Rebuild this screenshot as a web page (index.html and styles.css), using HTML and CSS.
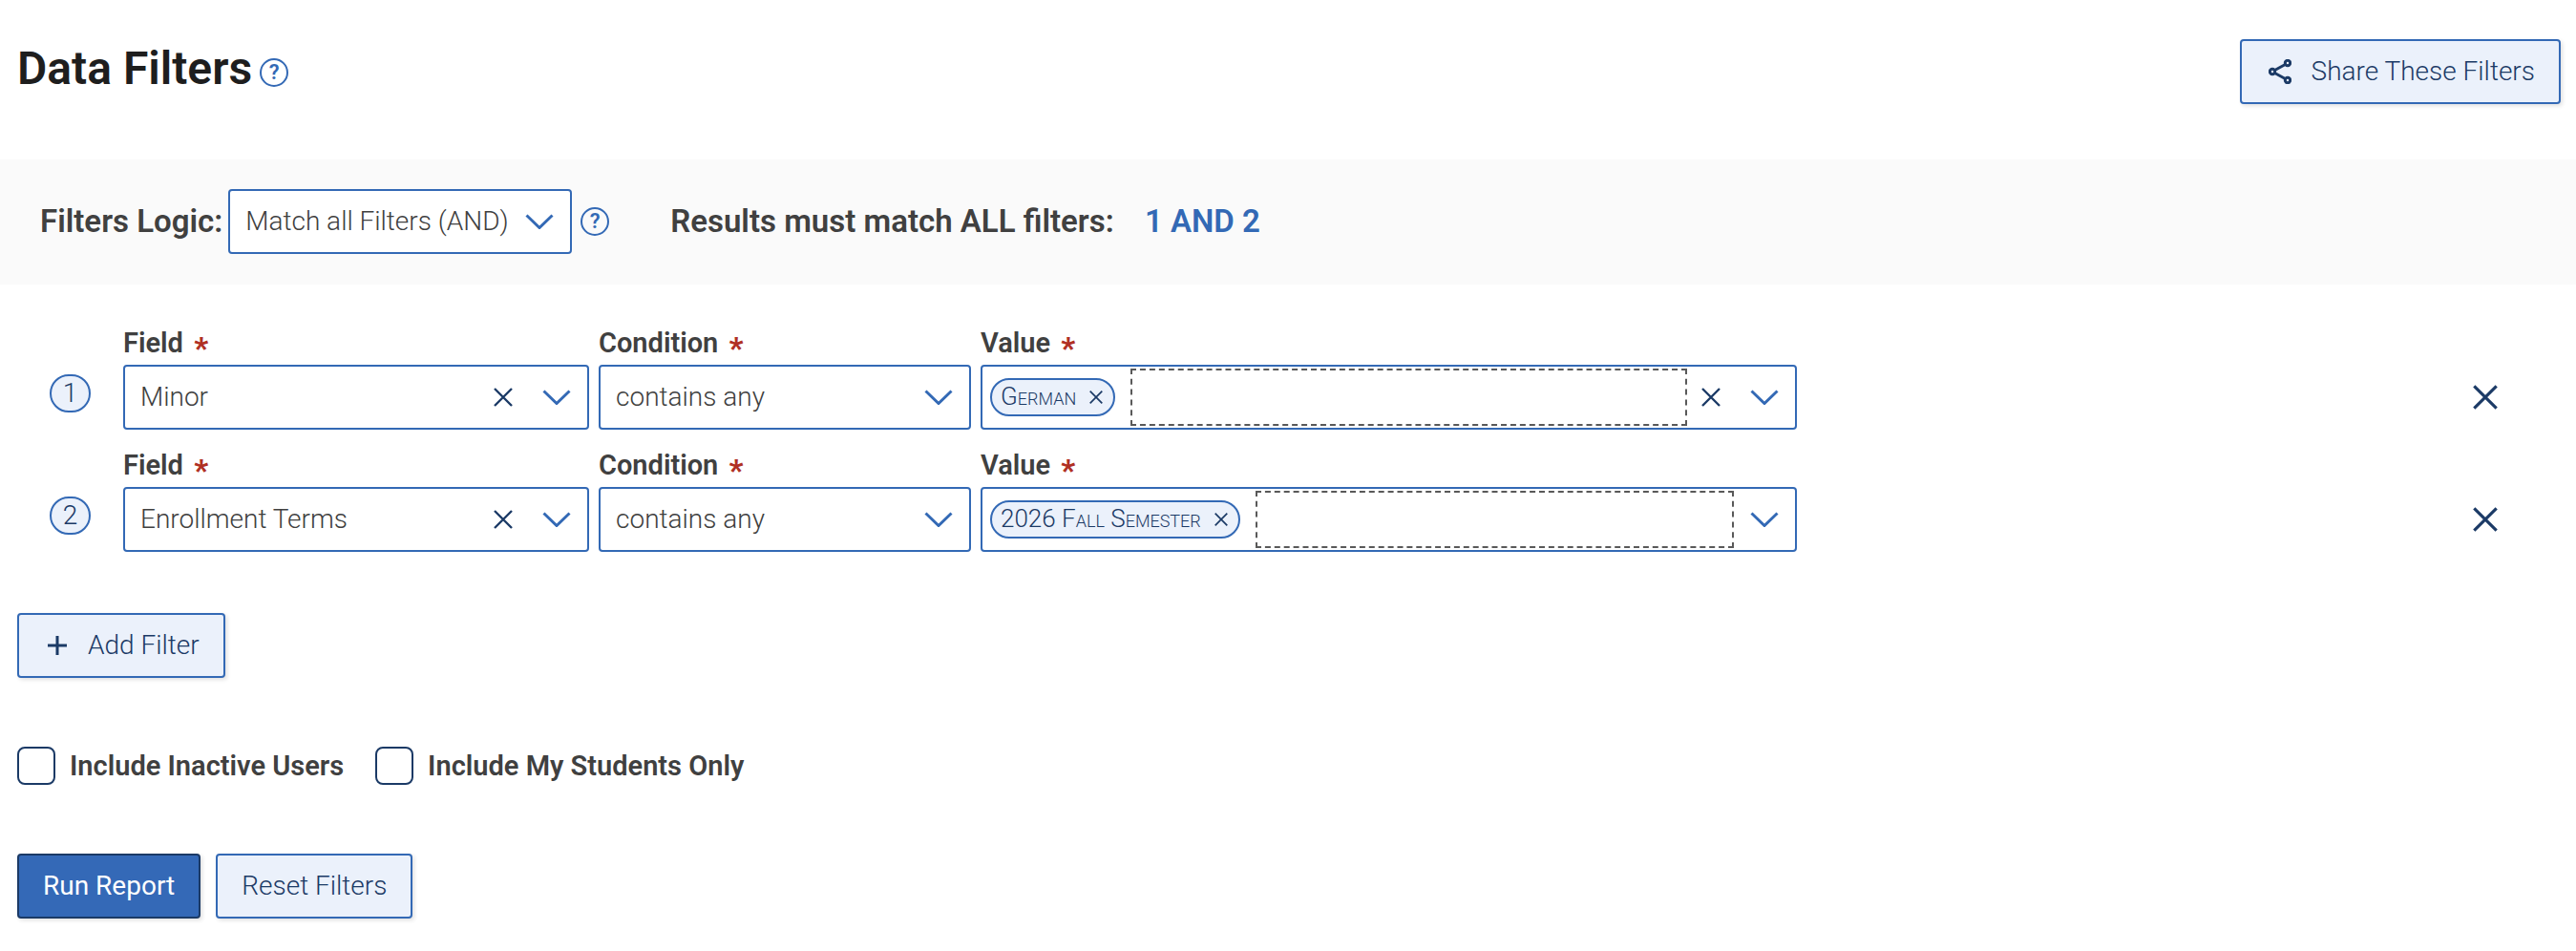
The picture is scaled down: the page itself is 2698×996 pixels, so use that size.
FILE: index.html
```
<!DOCTYPE html>
<html lang="en">
<head>
  <meta charset="UTF-8">
  <meta name="viewport" content="width=device-width, initial-scale=1.0">
  <title>Data Filters</title>
  <link rel="stylesheet" href="styles.css">
</head>
<body>

  <!-- shared icons -->
  <svg class="icon-defs" aria-hidden="true">
    <symbol id="chevron" viewBox="0 0 30 16">
      <path d="M1.5 1.5 L15 14.5 L28.5 1.5" />
    </symbol>
    <symbol id="cross" viewBox="0 0 20 20">
      <path d="M1 1 L19 19 M19 1 L1 19" />
    </symbol>
  </svg>

  <header class="page-header">
    <div class="title-group">
      <h1>Data Filters</h1>
      <button class="help-button" type="button" aria-label="Help with data filters">?</button>
    </div>
    <button class="button" type="button">
      <svg class="share-icon" viewBox="0 0 24 26">
        <path d="M6.5 11.5 L17.5 5.5 M6.5 14.5 L17.5 20.5" />
        <circle cx="4" cy="13" r="2.7" />
        <circle cx="20" cy="4" r="2.7" />
        <circle cx="20" cy="22" r="2.7" />
      </svg>
      Share These Filters
    </button>
  </header>

  <section class="logic-bar">
    <label class="logic-label" for="logic">Filters Logic:</label>
    <div class="select-box">
      <select id="logic">
        <option>Match all Filters (AND)</option>
      </select>
      <svg class="chevron"><use href="#chevron" /></svg>
    </div>
    <button class="help-button" type="button" aria-label="Help with filters logic">?</button>
    <p class="logic-result">Results must match ALL filters: <span class="logic-formula">1 AND 2</span></p>
  </section>

  <main>
    <div class="filter-row">
      <span class="filter-number">1</span>
      <div class="field">
        <label for="field-1">Field <span class="required">*</span></label>
        <div class="select-box">
          <select id="field-1">
            <option>Minor</option>
          </select>
          <button class="clear-button" type="button" aria-label="Clear field"><svg><use href="#cross" /></svg></button>
          <svg class="chevron"><use href="#chevron" /></svg>
        </div>
      </div>
      <div class="field">
        <label for="condition-1">Condition <span class="required">*</span></label>
        <div class="select-box">
          <select id="condition-1">
            <option>contains any</option>
          </select>
          <svg class="chevron"><use href="#chevron" /></svg>
        </div>
      </div>
      <div class="field">
        <label for="value-1">Value <span class="required">*</span></label>
        <div class="select-box">
          <span class="tag">
            <span>G<small>erman</small></span>
            <button type="button" aria-label="Remove German"><svg><use href="#cross" /></svg></button>
          </span>
          <input class="value-input" id="value-1" type="text">
          <button class="clear-button" type="button" aria-label="Clear value"><svg><use href="#cross" /></svg></button>
          <svg class="chevron"><use href="#chevron" /></svg>
        </div>
      </div>
      <button class="delete-button" type="button" aria-label="Delete filter 1"><svg><use href="#cross" /></svg></button>
    </div>

    <div class="filter-row">
      <span class="filter-number">2</span>
      <div class="field">
        <label for="field-2">Field <span class="required">*</span></label>
        <div class="select-box">
          <select id="field-2">
            <option>Enrollment Terms</option>
          </select>
          <button class="clear-button" type="button" aria-label="Clear field"><svg><use href="#cross" /></svg></button>
          <svg class="chevron"><use href="#chevron" /></svg>
        </div>
      </div>
      <div class="field">
        <label for="condition-2">Condition <span class="required">*</span></label>
        <div class="select-box">
          <select id="condition-2">
            <option>contains any</option>
          </select>
          <svg class="chevron"><use href="#chevron" /></svg>
        </div>
      </div>
      <div class="field">
        <label for="value-2">Value <span class="required">*</span></label>
        <div class="select-box">
          <span class="tag">
            <span>2026 F<small>all</small> S<small>emester</small></span>
            <button type="button" aria-label="Remove 2026 Fall Semester"><svg><use href="#cross" /></svg></button>
          </span>
          <input class="value-input" id="value-2" type="text">
          <svg class="chevron"><use href="#chevron" /></svg>
        </div>
      </div>
      <button class="delete-button" type="button" aria-label="Delete filter 2"><svg><use href="#cross" /></svg></button>
    </div>

    <button class="button add-button" type="button">
      <svg class="plus-icon" viewBox="0 0 20 20">
        <path d="M10 0 V20 M0 10 H20" />
      </svg>
      Add Filter
    </button>

    <div class="options">
      <label><input type="checkbox"> Include Inactive Users</label>
      <label><input type="checkbox"> Include My Students Only</label>
    </div>

    <div class="actions">
      <button class="button run-button" type="submit">Run Report</button>
      <button class="button" type="reset">Reset Filters</button>
    </div>
  </main>

</body>
</html>
```

FILE: styles.css
```
* {
  box-sizing: border-box;
}

body {
  margin: 0;
  background-color: #fff;
  color: #404040;
  font-family: Roboto, sans-serif;
  font-size: 28px;
  font-weight: 300;
  line-height: 34px;
}

button,
select,
input {
  font: inherit;
  color: inherit;
}

button {
  padding: 0;
  border: none;
  background: none;
  cursor: pointer;
}

svg {
  flex: none;
  fill: none;
  stroke: #1b3a66;
  stroke-width: 3;
}

.icon-defs {
  display: none;
}

/* header */

.page-header {
  display: flex;
  justify-content: space-between;
  align-items: flex-start;
  padding: 41px 16px 58px 18px;
}

.title-group {
  display: flex;
  align-items: center;
  gap: 8px;
}

h1 {
  margin: 0;
  color: #1e1e1e;
  font-size: 48px;
  font-weight: 600;
  line-height: 62px;
}

.help-button {
  width: 30px;
  height: 30px;
  border: 2px solid #3369b5;
  border-radius: 50%;
  color: #3369b5;
  font-size: 22px;
  font-weight: 600;
  line-height: 26px;
}

.title-group .help-button {
  margin-top: 8px;
}

.button {
  display: inline-flex;
  align-items: center;
  height: 68px;
  padding: 0 25px;
  border: 2px solid #3369b5;
  border-radius: 4px;
  background-color: #ebf1fb;
  color: #1b3a66;
  box-shadow: 2px 2px 4px rgba(0, 0, 0, 0.12);
}

.share-icon {
  width: 24px;
  height: 26px;
  margin-left: 3px;
  margin-right: 21px;
}

.plus-icon {
  width: 20px;
  height: 20px;
  margin-left: 5px;
  margin-right: 22px;
}

/* logic bar */

.logic-bar {
  display: flex;
  align-items: center;
  padding: 31px 42px 32px;
  background-color: #fafafa;
}

.logic-label,
.logic-result {
  font-size: 33px;
  font-weight: 600;
}

.logic-label {
  margin-right: 6px;
}

.logic-bar .help-button {
  margin-left: 9px;
}

.logic-result {
  margin: 0 0 0 64px;
}

.logic-formula {
  margin-left: 24px;
  color: #3369b5;
}

/* select boxes */

.select-box {
  display: flex;
  align-items: center;
  height: 68px;
  border: 2px solid #3369b5;
  border-radius: 4px;
  background-color: #fff;
}

.select-box select {
  flex: 1;
  min-width: 0;
  height: 100%;
  padding: 0 0 0 16px;
  border: none;
  background: none;
  appearance: none;
}

.chevron {
  width: 30px;
  height: 16px;
  margin: 0 17px;
  stroke: #3369b5;
}

.clear-button {
  display: flex;
  justify-content: center;
  width: 49px;
}

.clear-button svg {
  width: 20px;
  height: 20px;
  stroke-width: 2.4;
}

/* filter rows */

main {
  padding: 44px 16px 34px 18px;
}

.filter-row {
  display: grid;
  grid-template-columns: 101px 488fr 390fr 855fr 790fr;
  column-gap: 10px;
  align-items: end;
  margin-bottom: 20px;
}

.filter-number {
  width: 43px;
  height: 40px;
  margin-left: 34px;
  margin-bottom: 18px;
  border: 2px solid #3369b5;
  border-radius: 20px;
  background-color: #ebf1fb;
  color: #1b3a66;
  line-height: 36px;
  text-align: center;
}

.field label {
  display: block;
  margin-bottom: 6px;
  font-size: 29px;
  font-weight: 600;
}

.required {
  margin-left: 4px;
  color: #b03024;
  font-size: 32px;
  font-weight: 900;
  line-height: 0;
  vertical-align: -6px;
}

.tag {
  display: flex;
  align-items: center;
  gap: 14px;
  height: 40px;
  margin-left: 8px;
  padding: 0 11px 0 9px;
  border: 2px solid #3369b5;
  border-radius: 20px;
  background-color: #ebf1fb;
  color: #1b3a66;
  font-size: 26px;
  white-space: nowrap;
}

.tag small {
  font-size: 18px;
  text-transform: uppercase;
}

.tag button {
  display: flex;
}

.tag svg {
  width: 14px;
  height: 14px;
  stroke-width: 2.4;
}

.value-input {
  flex: 1;
  min-width: 0;
  height: 60px;
  margin-left: 16px;
  border: 2px dashed #595959;
  background: none;
}

.delete-button {
  display: flex;
  align-items: center;
  justify-self: end;
  height: 68px;
  margin-right: 66px;
}

.delete-button svg {
  width: 26px;
  height: 26px;
  stroke-width: 2.4;
}

/* bottom controls */

.add-button {
  margin-top: 44px;
}

.options {
  display: flex;
  gap: 33px;
  margin-top: 72px;
}

.options label {
  display: flex;
  align-items: center;
  gap: 15px;
  font-size: 29px;
  font-weight: 600;
}

.options input {
  width: 40px;
  height: 40px;
  margin: 0;
  border: 2px solid #1b3a66;
  border-radius: 8px;
  background-color: #fff;
  appearance: none;
}

.options input:checked {
  background-color: #3369b5;
}

.actions {
  display: flex;
  gap: 16px;
  margin-top: 72px;
}

.run-button {
  border-color: #1b3a66;
  background-color: #3469b7;
  color: #fff;
  font-weight: 400;
}
```
